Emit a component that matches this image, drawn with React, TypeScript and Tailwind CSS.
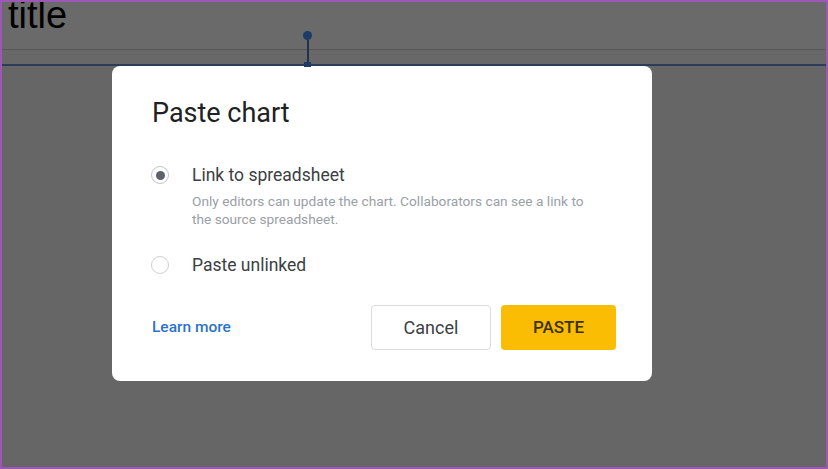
export default function App() {
  return (
    <div className="relative w-[828px] h-[469px] overflow-hidden border-2 border-[#9d57b4] bg-[#666666] font-['Roboto',sans-serif]">
      {/* dimmed doc behind the dialog */}
      <div className="h-[47px] bg-[#6a6a6a] overflow-hidden">
        <div className="-mt-[6px] ml-[6px] text-[38px] leading-none text-black font-['Liberation_Sans',Arial,sans-serif]">
          title
        </div>
      </div>
      <div className="h-px bg-[#585858]" />
      <div className="h-[14px] bg-[#686868]" />
      <div className="h-[2px] bg-[#2b3d5b]" />

      {/* chart handle */}
      <div className="absolute left-[301px] top-[29px] flex flex-col items-center">
        <div className="w-[9px] h-[9px] rounded-full bg-[#1c3c68]" />
        <div className="w-[2px] h-[22px] bg-[#22324a]" />
        <div className="w-[7px] h-[5px] bg-[#1c3c68]" />
      </div>

      <div className="ml-[110px] w-[540px] rounded-[8px] bg-white pt-[31px] pl-[40px] pr-[36px] pb-[31px]">
        <h2 className="text-[27px] leading-[32px] text-[#202124]">Paste chart</h2>

        <div className="mt-[34px] flex items-center h-[24px]">
          <div className="w-[18px] h-[18px] -ml-px rounded-full border border-[#c4c4c4] flex items-center justify-center">
            <div className="w-[9px] h-[9px] rounded-full bg-[#5f6368]" />
          </div>
          <span className="ml-[23px] text-[17.5px] text-[#3c4043]">Link to spreadsheet</span>
        </div>
        <p className="mt-[5px] ml-[40px] text-[13.7px] leading-[18px] text-[#9aa0a6]">
          Only editors can update the chart. Collaborators can see a link to
          <br />
          the source spreadsheet.
        </p>

        <div className="mt-[25px] flex items-center h-[24px]">
          <div className="w-[18px] h-[18px] -ml-px rounded-full border border-[#d0d0d0]" />
          <span className="ml-[23px] text-[17.5px] text-[#3c4043]">Paste unlinked</span>
        </div>

        <div className="mt-[28px] flex items-center">
          <a className="text-[15.5px] font-medium text-[#2b74c9]">Learn more</a>
          <div className="ml-auto flex gap-[10px]">
            <button className="w-[120px] h-[45px] rounded-[4px] border border-[#dadce0] bg-white text-[18px] text-[#3c4043]">
              Cancel
            </button>
            <button className="w-[115px] h-[45px] rounded-[4px] bg-[#fbbc04] text-[17px] font-medium text-[#3c3200]">
              PASTE
            </button>
          </div>
        </div>
      </div>
    </div>
  );
}
